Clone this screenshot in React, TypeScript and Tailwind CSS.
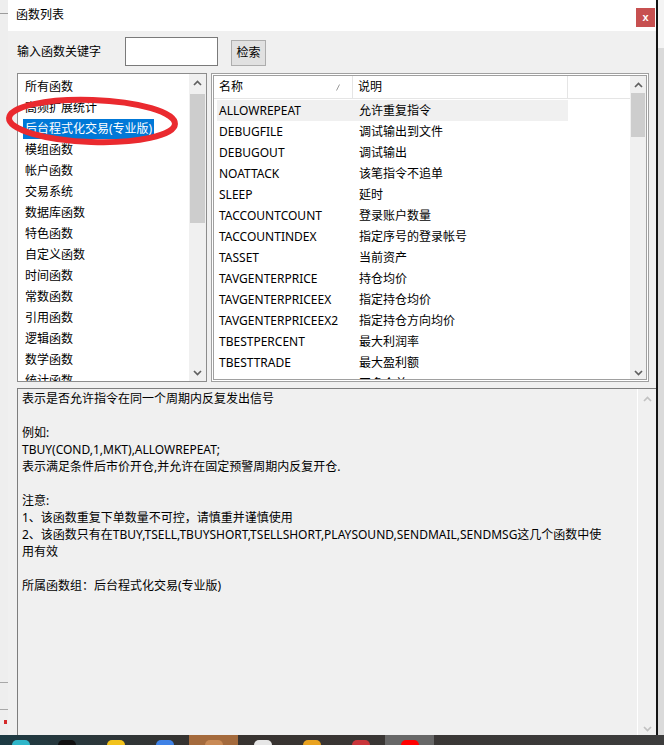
import React from "react";

const categories = [
  "所有函数",
  "高频扩展统计",
  "后台程式化交易(专业版)",
  "模组函数",
  "帐户函数",
  "交易系统",
  "数据库函数",
  "特色函数",
  "自定义函数",
  "时间函数",
  "常数函数",
  "引用函数",
  "逻辑函数",
  "数学函数",
  "统计函数",
];

const functions: [string, string][] = [
  ["ALLOWREPEAT", "允许重复指令"],
  ["DEBUGFILE", "调试输出到文件"],
  ["DEBUGOUT", "调试输出"],
  ["NOATTACK", "该笔指令不追单"],
  ["SLEEP", "延时"],
  ["TACCOUNTCOUNT", "登录账户数量"],
  ["TACCOUNTINDEX", "指定序号的登录帐号"],
  ["TASSET", "当前资产"],
  ["TAVGENTERPRICE", "持仓均价"],
  ["TAVGENTERPRICEEX", "指定持仓均价"],
  ["TAVGENTERPRICEEX2", "指定持仓方向均价"],
  ["TBESTPERCENT", "最大利润率"],
  ["TBESTTRADE", "最大盈利额"],
  ["TBUY", "开多仓单"],
];

const help = [
  "表示是否允许指令在同一个周期内反复发出信号",
  "",
  "例如:",
  "TBUY(COND,1,MKT),ALLOWREPEAT;",
  "表示满足条件后市价开仓,并允许在固定预警周期内反复开仓.",
  "",
  "注意:",
  "1、该函数重复下单数量不可控，请慎重并谨慎使用",
  "2、该函数只有在TBUY,TSELL,TBUYSHORT,TSELLSHORT,PLAYSOUND,SENDMAIL,SENDMSG这几个函数中使",
  "用有效",
  "",
  "所属函数组：后台程式化交易(专业版)",
];

const Chevron = ({ up, light }: { up?: boolean; light?: boolean }) => (
  <svg width="9" height="6" viewBox="0 0 9 6">
    <path
      d={up ? "M1 5L4.5 1.5L8 5" : "M1 1L4.5 4.5L8 1"}
      fill="none"
      stroke={light ? "#c2c2c2" : "#606060"}
      strokeWidth="1.7"
    />
  </svg>
);

const taskIcons = [
  { w: "w-[42px]", icon: "bg-[#2fb6c9]", cell: "" },
  { w: "w-[49px]", icon: "bg-[#111111]", cell: "" },
  { w: "w-[49px]", icon: "bg-[#f2c21b]", cell: "" },
  { w: "w-[49px]", icon: "bg-[#3f82e6]", cell: "" },
  { w: "w-[49px]", icon: "bg-[#c98a55]", cell: "bg-[#a46a3c]" },
  { w: "w-[49px]", icon: "bg-[#e6e6e6]", cell: "" },
  { w: "w-[49px]", icon: "bg-[#e9a21f]", cell: "" },
  { w: "w-[49px]", icon: "bg-[#c9353a]", cell: "" },
  { w: "w-[49px]", icon: "bg-[#ff0000]", cell: "bg-[#676767]" },
];

export default function App() {
  return (
    <div className="relative flex h-[745px] w-[664px] flex-col overflow-hidden bg-[#f0f0f0] font-['Noto_Sans','Noto_Sans_CJK_SC',sans-serif] text-[12px] text-black">
      <div className="flex h-[735px]">
        {/* desktop strip on the left */}
        <div className="w-[8px] shrink-0 bg-[#eeeeee]">
          <div className="mt-[13px] h-px bg-[#9c9c9c]" />
          <div className="mt-[668px] h-px bg-[#a8a8a8]" />
          <div className="mt-[26px] h-px bg-[#a8a8a8]" />
          <div className="ml-[4px] mt-[10px] h-[4px] w-[3px] bg-[#d42a2a]" />
        </div>

        {/* dialog */}
        <div className="flex w-[648px] shrink-0 flex-col bg-[#f0f0f0]">
          <div className="flex h-[31px] shrink-0 items-start justify-between bg-white pl-[8px] pr-[1px]">
            <span className="mt-[6px] leading-[18px]">函数列表</span>
            <div className="mt-[8px] flex h-[19px] w-[19px] items-center justify-center bg-[#c75050] font-['Liberation_Sans',sans-serif] text-[11px] font-bold leading-none text-white">
              x
            </div>
          </div>

          <div className="flex flex-1 flex-col pl-[9px]">
            <div className="mt-[6px] flex h-[29px] items-center">
              <span className="w-[108px] leading-[18px]">输入函数关键字</span>
              <div className="h-[29px] w-[93px] border border-[#7a7a7a] bg-white" />
              <div className="ml-[13px] mt-[3px] flex h-[26px] w-[35px] items-center justify-center border border-[#adadad] bg-[#e1e1e1] leading-[18px]">
                检索
              </div>
            </div>

            <div className="mt-[7px] flex h-[309px] gap-[4px]">
              {/* category list */}
              <div className="flex w-[190px] border border-[#8c8c8c] bg-white">
                <div className="flex-1 overflow-hidden pt-[2px]">
                  {categories.map((c, i) => (
                    <div key={c} className="flex h-[21px] items-center pl-[5px]">
                      <span
                        className={
                          i === 2
                            ? "bg-[#0078d7] px-[2px] leading-[20px] text-white"
                            : "px-[2px] leading-[20px]"
                        }
                      >
                        {c}
                      </span>
                    </div>
                  ))}
                </div>
                <div className="flex w-[17px] flex-col bg-[#f0f0f0]">
                  <div className="flex h-[18px] items-center justify-center">
                    <Chevron up />
                  </div>
                  <div className="mx-[1px] mt-[2px] h-[129px] bg-[#cdcdcd]" />
                  <div className="flex-1" />
                  <div className="flex h-[17px] justify-center pt-[6px]">
                    <Chevron />
                  </div>
                </div>
              </div>

              {/* function list */}
              <div className="w-[438px] border border-[#a0a0a0] bg-white p-px">
                <div className="flex h-full border border-[#a0a0a0]">
                  <div className="flex-1 overflow-hidden">
                    <div className="flex h-[23px] border-b border-[#e5e5e5] bg-white">
                      <div className="flex w-[139px] items-center justify-between border-r border-[#e5e5e5] pl-[5px] pr-[12px]">
                        <span className="leading-[18px]">名称</span>
                        <svg width="4" height="7" viewBox="0 0 4 7">
                          <path d="M0.5 6.5L3.5 0.5" stroke="#9a9a9a" strokeWidth="1" />
                        </svg>
                      </div>
                      <div className="flex w-[215px] items-center border-r border-[#e5e5e5] pl-[5px]">
                        <span className="leading-[18px]">说明</span>
                      </div>
                      <div className="flex-1" />
                    </div>
                    <div className="pl-[3px] pt-px">
                      {functions.map(([name, desc], i) => (
                        <div
                          key={name}
                          className={
                            i === 0
                              ? "flex h-[21px] w-[351px] items-center bg-[#f0f0f0] pl-[2px]"
                              : "flex h-[21px] w-[351px] items-center pl-[2px]"
                          }
                        >
                          <span className="w-[140px] leading-[18px]">{name}</span>
                          <span className="leading-[18px]">{desc}</span>
                        </div>
                      ))}
                    </div>
                  </div>
                  <div className="flex w-[16px] flex-col bg-[#f0f0f0]">
                    <div className="flex h-[17px] items-center justify-center">
                      <Chevron up />
                    </div>
                    <div className="mx-[1px] h-[44px] bg-[#cdcdcd]" />
                    <div className="flex-1" />
                    <div className="flex h-[17px] justify-center pt-[8px]">
                      <Chevron />
                    </div>
                  </div>
                </div>
              </div>
            </div>

            {/* description box */}
            <div className="mt-[6px] flex flex-1 border-l border-t border-[#7d7d7d] bg-[#f0f0f0]">
              <div className="flex-1 pl-[4px] pt-px">
                {help.map((line, i) =>
                  line ? (
                    <div key={i} className="h-[17px] whitespace-nowrap leading-[17px]">
                      {line}
                    </div>
                  ) : (
                    <div key={i} className="h-[17px]" />
                  )
                )}
              </div>
              <div className="flex w-[19px] flex-col border-l border-white">
                <div className="flex h-[17px] items-center justify-center pt-[2px]">
                  <Chevron up light />
                </div>
                <div className="flex-1" />
                <div className="flex h-[10px] justify-center pt-[1px]">
                  <Chevron light />
                </div>
              </div>
            </div>
          </div>
        </div>

        {/* desktop strip on the right */}
        <div className="flex w-[8px] shrink-0">
          <div className="w-[2px] bg-[#141414]" />
          <div className="flex-1 bg-[#dadada]">
            <div className="h-[48px] bg-[#f4f4f4]" />
          </div>
        </div>
      </div>

      {/* taskbar */}
      <div className="flex h-[10px] bg-gradient-to-r from-[#1c3a43] via-[#37322f] via-30% to-[#3c3c3c]">
        {taskIcons.map((t, i) => (
          <div key={i} className={`${t.w} ${t.cell} flex justify-center`}>
            <div className={`${t.icon} mt-[5px] h-[8px] w-[18px] rounded-t-[5px]`} />
          </div>
        ))}
      </div>

      {/* red hand-drawn annotation */}
      <svg className="pointer-events-none absolute left-0 top-0" width="664" height="745">
        <ellipse
          cx="92"
          cy="121"
          rx="83"
          ry="21"
          transform="rotate(2 92 121)"
          fill="none"
          stroke="#ea2a2f"
          strokeWidth="6"
        />
      </svg>
    </div>
  );
}
